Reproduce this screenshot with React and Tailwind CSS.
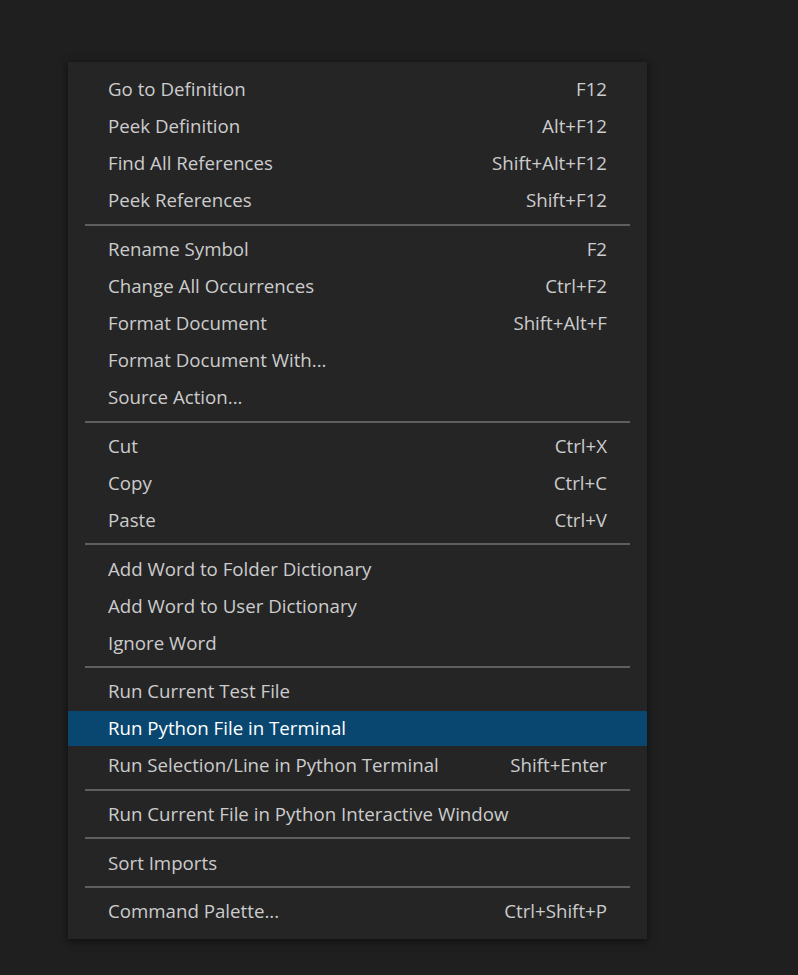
import React from 'react';

const groups = [
  [
    { label: 'Go to Definition', key: 'F12' },
    { label: 'Peek Definition', key: 'Alt+F12' },
    { label: 'Find All References', key: 'Shift+Alt+F12' },
    { label: 'Peek References', key: 'Shift+F12' },
  ],
  [
    { label: 'Rename Symbol', key: 'F2' },
    { label: 'Change All Occurrences', key: 'Ctrl+F2' },
    { label: 'Format Document', key: 'Shift+Alt+F' },
    { label: 'Format Document With...' },
    { label: 'Source Action...' },
  ],
  [
    { label: 'Cut', key: 'Ctrl+X' },
    { label: 'Copy', key: 'Ctrl+C' },
    { label: 'Paste', key: 'Ctrl+V' },
  ],
  [
    { label: 'Add Word to Folder Dictionary' },
    { label: 'Add Word to User Dictionary' },
    { label: 'Ignore Word' },
  ],
  [
    { label: 'Run Current Test File' },
    { label: 'Run Python File in Terminal', active: true },
    { label: 'Run Selection/Line in Python Terminal', key: 'Shift+Enter' },
  ],
  [{ label: 'Run Current File in Python Interactive Window' }],
  [{ label: 'Sort Imports' }],
  [{ label: 'Command Palette...', key: 'Ctrl+Shift+P' }],
];

const MenuItem = ({ item }) => (
  <div className="h-[37px] py-px">
    <div
      className={`h-full flex items-center justify-between pl-[40px] pr-[40px] ${
        item.active ? 'bg-[#094771] text-white' : 'text-[#cccccc]'
      }`}
    >
      <span>{item.label}</span>
      {item.key && <span>{item.key}</span>}
    </div>
  </div>
);

const App = () => {
  return (
    <div
      className="w-[798px] h-[975px] bg-[#1f1f1f] pt-[62px] pl-[68px]"
      style={{ fontFamily: '"Open Sans", "Noto Sans", sans-serif' }}
    >
      <div className="w-[579px] bg-[#252526] py-[9px] text-[18.7px] shadow-[0_2px_8px_rgba(0,0,0,0.6)]">
        {groups.map((group, gi) => (
          <div key={gi}>
            {gi > 0 && (
              <div className="h-[11.7px] flex items-center px-[17px]">
                <div className="h-[2px] w-full bg-[#5f5f5f]" />
              </div>
            )}
            {group.map((item) => (
              <MenuItem key={item.label} item={item} />
            ))}
          </div>
        ))}
      </div>
    </div>
  );
};

export default App;
